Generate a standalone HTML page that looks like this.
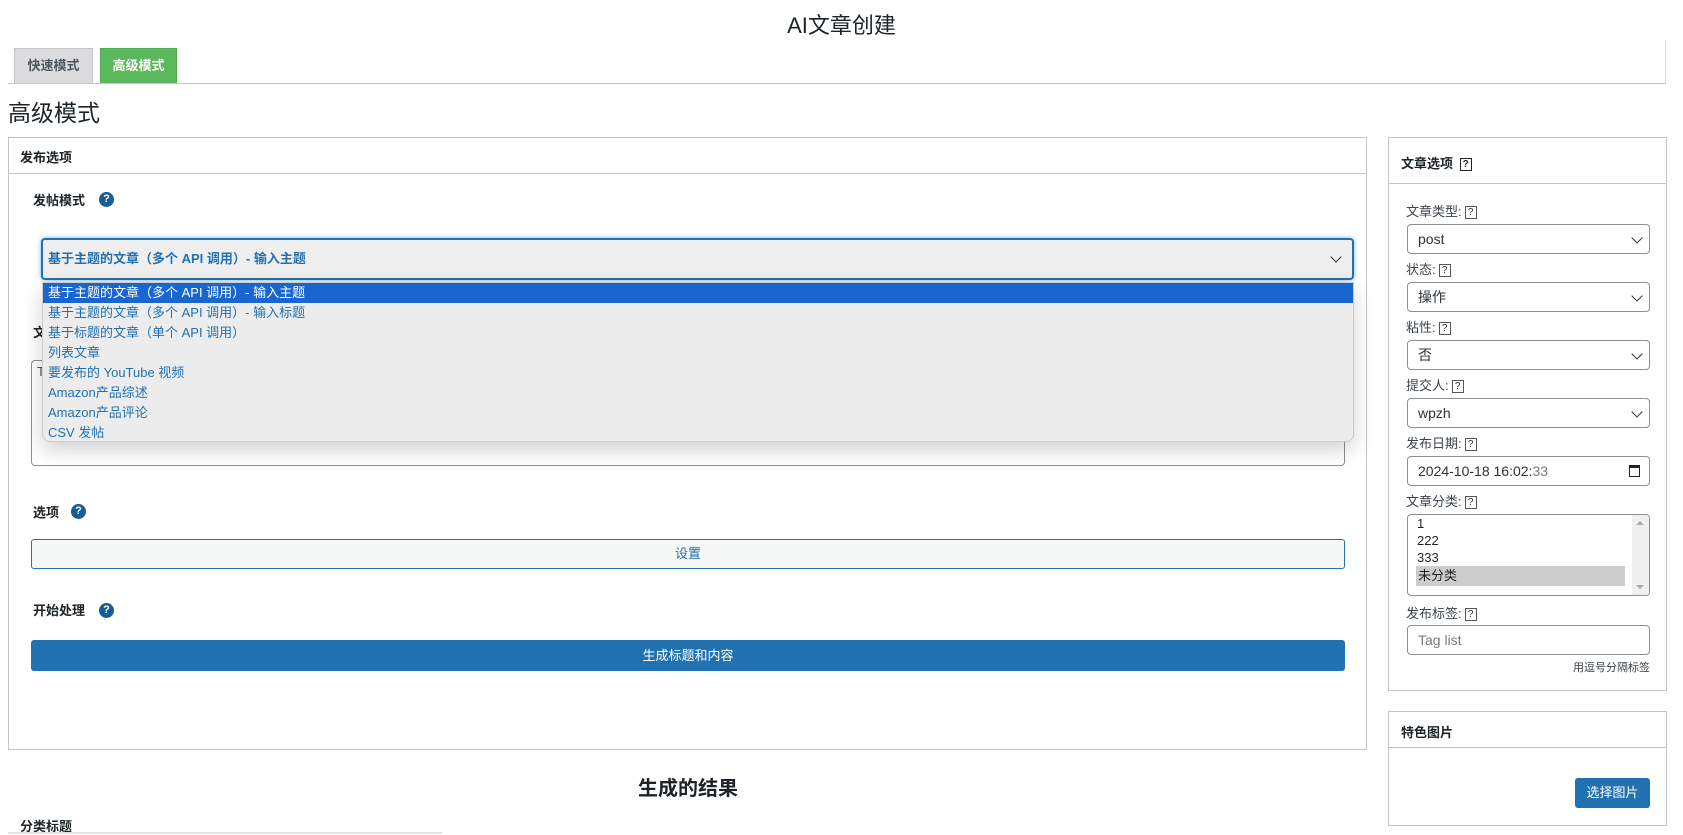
<!DOCTYPE html>
<html><head><meta charset="utf-8">
<style>
*{box-sizing:border-box;margin:0;padding:0}
body{width:1683px;height:834px;overflow:hidden;background:#fff;font-family:"Liberation Sans","Noto Sans CJK SC",sans-serif;color:#1d2327;position:relative;font-size:13px}
.a{position:absolute}
.help{position:absolute;width:15px;height:15px;border-radius:50%;background:#135e96;color:#fff;font-size:11px;font-weight:bold;text-align:center;line-height:15px}
.q{display:inline-block;width:12px;height:13px;border:1px solid #555;font-size:10px;line-height:11px;text-align:center;color:#333;vertical-align:middle;margin-left:3px}
.lbl{position:absolute;left:1406px;font-size:13px;color:#3c434a}
.sel{position:absolute;left:1407px;width:243px;height:30px;border:1px solid #8c8f94;border-radius:4px;background:#fff;font-size:14px;padding-left:10px;line-height:28px;color:#2c3338}
.chev{position:absolute;right:8px;top:9px;width:8px;height:8px;border-right:1.5px solid #333;border-bottom:1.5px solid #333;transform:rotate(45deg)}
.opt{height:20px;line-height:20px;padding-left:5px;color:#2271b1;font-size:13px}
</style></head><body>
<div class="a" style="left:0;width:1683px;top:8px;text-align:center;font-size:22px;color:#1d2327">AI文章创建</div>
<div class="a" style="left:1665px;top:40px;width:1px;height:43px;background:#ddd"></div>
<div class="a" style="left:8px;top:83px;width:1658px;height:1px;background:#c3c4c7"></div>
<div class="a" style="left:14px;top:48px;width:79px;height:35px;background:#dcdcde;border:1px solid #c3c4c7;border-bottom:none;font-size:13px;font-weight:bold;color:#50575e;text-align:center;line-height:34px">快速模式</div>
<div class="a" style="left:100px;top:48px;width:77px;height:35px;background:#5cb85c;border:1px solid #4cae4c;border-bottom:none;font-size:13px;font-weight:bold;color:#fff;text-align:center;line-height:34px">高级模式</div>
<div class="a" style="left:8px;top:94px;font-size:23px;color:#1d2327">高级模式</div>

<!-- main box -->
<div class="a" style="left:8px;top:137px;width:1359px;height:613px;border:1px solid #c3c4c7"></div>
<div class="a" style="left:8px;top:173px;width:1359px;height:1px;background:#c3c4c7"></div>
<div class="a" style="left:20px;top:147px;font-size:13px;font-weight:bold">发布选项</div>
<div class="a" style="left:33px;top:190px;font-size:13px;font-weight:bold">发帖模式</div>
<div class="help" style="left:99px;top:192px">?</div>

<div class="a" style="left:33px;top:322px;font-size:13px;font-weight:bold">文</div>
<div class="a" style="left:31px;top:360px;width:1314px;height:106px;border:1px solid #8c8f94;border-radius:4px;background:#fff"></div>
<div class="a" style="left:37px;top:364px;font-size:13px;color:#555">T</div>

<div class="a" style="left:33px;top:502px;font-size:13px;font-weight:bold">选项</div>
<div class="help" style="left:71px;top:504px">?</div>
<div class="a" style="left:31px;top:539px;width:1314px;height:30px;border:1px solid #2271b1;border-radius:3px;background:#f6f7f7;color:#2271b1;text-align:center;line-height:28px;font-size:13px">设置</div>
<div class="a" style="left:33px;top:600px;font-size:13px;font-weight:bold">开始处理</div>
<div class="help" style="left:99px;top:603px">?</div>
<div class="a" style="left:31px;top:640px;width:1314px;height:31px;border-radius:3px;background:#2271b1;color:#fff;text-align:center;line-height:31px;font-size:13px">生成标题和内容</div>

<div class="a" style="left:0;width:1376px;top:772px;text-align:center;font-size:20px;font-weight:bold">生成的结果</div>
<div class="a" style="left:20px;top:816px;font-size:13px;font-weight:bold">分类标题</div>
<div class="a" style="left:8px;top:832px;width:434px;height:2px;background:#e5e5ec"></div>

<!-- select + dropdown -->
<div class="a" style="left:41px;top:238px;width:1313px;height:42px;border:2px solid #2271b1;border-radius:4px;background:#eeeeee;box-shadow:0 0 4px #72aee6;font-size:13px;font-weight:bold;color:#2271b1;padding-left:5px;line-height:38px">基于主题的文章（多个 API 调用）- 输入主题<div class="chev" style="right:12px;top:13px;border-color:#333"></div></div>
<div class="a" style="left:42px;top:282px;width:1312px;height:160px;background:#ececec;border-radius:0 0 8px 8px;box-shadow:0 8px 20px rgba(0,0,0,.18);border:1px solid #ccc;overflow:hidden">
<div class="opt" style="background:#1a66d0;color:#fff">基于主题的文章（多个 API 调用）- 输入主题</div>
<div class="opt">基于主题的文章（多个 API 调用）- 输入标题</div>
<div class="opt">基于标题的文章（单个 API 调用）</div>
<div class="opt">列表文章</div>
<div class="opt">要发布的 YouTube 视频</div>
<div class="opt">Amazon产品综述</div>
<div class="opt">Amazon产品评论</div>
<div class="opt">CSV 发帖</div>
</div>

<!-- right panel -->
<div class="a" style="left:1388px;top:137px;width:279px;height:554px;border:1px solid #c3c4c7"></div>
<div class="a" style="left:1388px;top:183px;width:279px;height:1px;background:#c3c4c7"></div>
<div class="a" style="left:1401px;top:153px;font-size:13px;font-weight:bold">文章选项 <span class="q" style="border-color:#222;font-weight:bold;color:#222">?</span></div>

<div class="lbl" style="top:201px">文章类型:<span class="q">?</span></div>
<div class="sel" style="top:224px">post<div class="chev"></div></div>
<div class="lbl" style="top:259px">状态:<span class="q">?</span></div>
<div class="sel" style="top:282px">操作<div class="chev"></div></div>
<div class="lbl" style="top:317px">粘性:<span class="q">?</span></div>
<div class="sel" style="top:340px">否<div class="chev"></div></div>
<div class="lbl" style="top:375px">提交人:<span class="q">?</span></div>
<div class="sel" style="top:398px">wpzh<div class="chev"></div></div>
<div class="lbl" style="top:433px">发布日期:<span class="q">?</span></div>
<div class="sel" style="top:456px">2024-10-18 16:02:<span style="color:#777">33</span><div class="a" style="right:9px;top:8px;width:11px;height:12px;border:1.5px solid #222;border-top-width:3px"></div></div>
<div class="lbl" style="top:491px">文章分类:<span class="q">?</span></div>
<div class="a" style="left:1407px;top:514px;width:243px;height:82px;border:1px solid #8c8f94;border-radius:4px;background:#fff;font-size:13px;line-height:17px;color:#1d2327;overflow:hidden">
<div style="padding-left:9px">1</div><div style="padding-left:9px">222</div><div style="padding-left:9px">333</div>
<div style="margin-left:8px;width:209px;background:#cdcdcd;padding-left:2px;height:20px;line-height:20px">未分类</div>
<div class="a" style="right:0;top:0;width:17px;height:80px;background:#f0f0f0"></div>
<div class="a" style="right:5px;top:6px;border:4px solid transparent;border-bottom:4px solid #aaa;border-top:none"></div>
<div class="a" style="right:5px;bottom:6px;border:4px solid transparent;border-top:4px solid #aaa;border-bottom:none"></div>
</div>
<div class="lbl" style="top:603px">发布标签:<span class="q">?</span></div>
<div class="sel" style="top:625px;color:#777">Tag list</div>
<div class="a" style="left:1407px;width:243px;top:659px;text-align:right;font-size:11px;color:#3c434a">用逗号分隔标签</div>

<div class="a" style="left:1388px;top:711px;width:279px;height:115px;border:1px solid #c3c4c7"></div>
<div class="a" style="left:1388px;top:747px;width:279px;height:1px;background:#c3c4c7"></div>
<div class="a" style="left:1401px;top:722px;font-size:13px;font-weight:bold">特色图片</div>
<div class="a" style="left:1575px;top:778px;width:75px;height:30px;background:#2271b1;border-radius:3px;color:#fff;text-align:center;line-height:30px;font-size:13px">选择图片</div>
</body></html>
